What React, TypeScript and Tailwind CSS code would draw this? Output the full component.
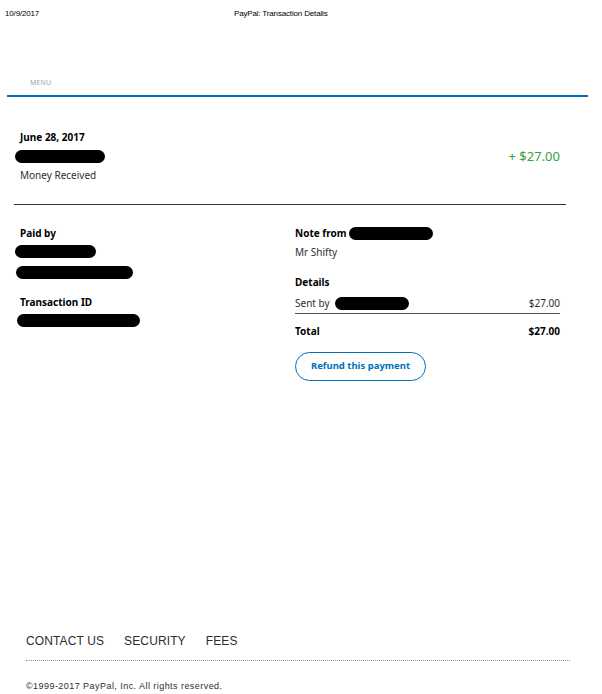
import React from 'react';

const Redacted = ({ w, h = 13, className = '' }: { w: number; h?: number; className?: string }) => (
  <span
    className={`inline-block rounded-full bg-black align-middle ${className}`}
    style={{ width: w, height: h }}
  />
);

const Row = ({ left, right, bold = false }: { left: React.ReactNode; right: string; bold?: boolean }) => (
  <div className={`flex items-center justify-between ${bold ? 'font-bold text-black' : 'text-[#2c2e2f]'}`}>
    <div className="flex items-center">{left}</div>
    <span>{right}</span>
  </div>
);

export default function App() {
  const sans = "font-['Noto_Sans',_'Open_Sans',_sans-serif]";
  const arial = "font-['Liberation_Sans',_Arial,_sans-serif]";

  return (
    <div className={`flex min-h-[694px] w-[602px] flex-col bg-white ${sans}`}>
      {/* print header */}
      <div className={`flex h-[18px] items-end px-[5px] text-[8px] leading-none tracking-[-0.02em] text-black ${arial}`}>
        <span className="w-[229px]">10/9/2017</span>
        <span>PayPal: Transaction Details</span>
      </div>

      {/* nav */}
      <div className="mt-[61px] pl-[30px] text-[7px] uppercase leading-none tracking-wide text-[#9da3a6]">Menu</div>
      <div className="mx-[7px] mt-[9px] h-[2px] w-[581px] bg-[#0070ba]" />

      {/* summary */}
      <div className="mt-[31px] flex items-center justify-between pl-[20px] pr-[42px]">
        <div className="flex flex-col text-[10px] leading-[19px] text-[#2c2e2f]">
          <span className="font-bold text-black">June 28, 2017</span>
          <Redacted w={90} className="-ml-[5px] my-[3px]" />
          <span>Money Received</span>
        </div>
        <span className="text-[13px] text-[#3b9e3b]">+ $27.00</span>
      </div>
      <div className="mx-[14px] mt-[19px] h-px w-[552px] bg-[#333]" />

      {/* details */}
      <div className="mt-[19px] flex text-[10px] text-[#2c2e2f]">
        <div className="flex w-[295px] flex-col pl-[20px]">
          <span className="font-bold leading-[18px] text-black">Paid by</span>
          <Redacted w={81} className="-ml-[5px] mt-[3px]" />
          <Redacted w={117} className="-ml-[4px] mt-[8px]" />
          <span className="mt-[14px] font-bold leading-[18px] text-black">Transaction ID</span>
          <Redacted w={123} className="-ml-[3px] mt-[3px]" />
        </div>
        <div className="flex w-[265px] flex-col">
          <div className="flex items-center leading-[18px]">
            <span className="font-bold text-black">Note from</span>
            <Redacted w={84} className="ml-[3px]" />
          </div>
          <span className="mt-[1px] leading-[18px]">Mr Shifty</span>
          <span className="mt-[12px] font-bold leading-[18px] text-black">Details</span>
          <div className="mt-[3px] pb-[1px] leading-[18px]">
            <Row left={<><span>Sent by</span><Redacted w={74} className="ml-[5px]" /></>} right="$27.00" />
          </div>
          <div className="h-px w-full bg-[#555]" />
          <div className="mt-[8px] leading-[18px]">
            <Row left={<span>Total</span>} right="$27.00" bold />
          </div>
          <button className="mt-[12px] h-[29px] w-[131px] rounded-full border border-[#0070ba] text-[9.5px] font-bold text-[#0070ba]">
            Refund this payment
          </button>
        </div>
      </div>

      {/* footer */}
      <div className={`mt-auto px-[26px] pb-[3px] ${arial}`}>
        <div className="flex gap-[20px] text-[12px] leading-none tracking-[0.01em] text-[#2c2e2f]">
          <a>CONTACT US</a>
          <a>SECURITY</a>
          <a>FEES</a>
        </div>
        <div className="mt-[13px] w-[544px] border-t border-dotted border-[#999]" />
        <p className="mt-[21px] text-[9px] leading-none tracking-[0.05em] text-[#2c2e2f]">©1999-2017 PayPal, Inc. All rights reserved.</p>
      </div>
    </div>
  );
}
